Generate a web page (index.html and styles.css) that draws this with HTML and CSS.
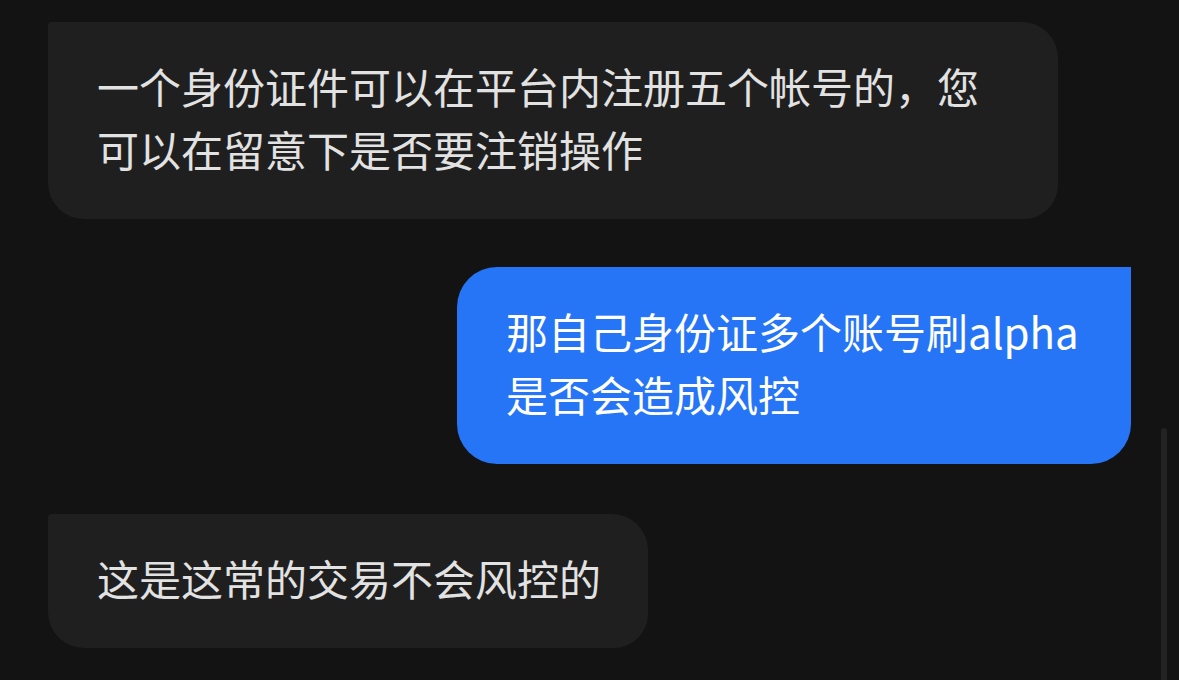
FILE: index.html
```html
<!DOCTYPE html>
<html lang="zh-CN">
<head>
    <meta charset="UTF-8">
    <meta name="viewport" content="width=device-width, initial-scale=1.0">
    <title>Chat</title>
    <link rel="stylesheet" href="styles.css">
</head>
<body>

    <div class="chat">
        <div class="msg msg-in msg-wide">
            一个身份证件可以在平台内注册五个帐号的，您可以在留意下是否要注销操作
        </div>

        <div class="msg msg-out">
            那自己身份证多个账号刷alpha是否会造成风控
        </div>

        <div class="msg msg-in">
            这是这常的交易不会风控的
        </div>
    </div>

    <!-- scroll indicator -->
    <div class="scrollbar"></div>

</body>
</html>
```

FILE: styles.css
```css
html, body {
    margin: 0;
    height: 100%;
    background-color: #131313;
    overflow: hidden;
}
body {
    font-family: "Noto Sans CJK SC", "Noto Sans", sans-serif;
    position: relative;
}
.chat {
    display: flex;
    flex-direction: column;
    padding: 22px 48px 0 48px;
}
.msg {
    font-size: 42px;
    line-height: 63px;
    padding: 32px 47px 39px 49px;
    width: fit-content;
    box-sizing: border-box;
}
.msg-in {
    background-color: #1f1f1f;
    color: #e2e2e2;
    border-radius: 4px 36px 34px 36px;
    align-self: flex-start;
    margin-bottom: 48px;
}
.msg-wide {
    width: 1010px;
}
.msg-out {
    background-color: #2575f6;
    color: #ffffff;
    border-radius: 40px 0 40px 40px;
    align-self: flex-end;
    width: 674px;
    margin-bottom: 50px;
}
.scrollbar {
    position: absolute;
    right: 12px;
    top: 428px;
    width: 6px;
    height: 260px;
    border-radius: 3px;
    background-color: #232323;
}
```
